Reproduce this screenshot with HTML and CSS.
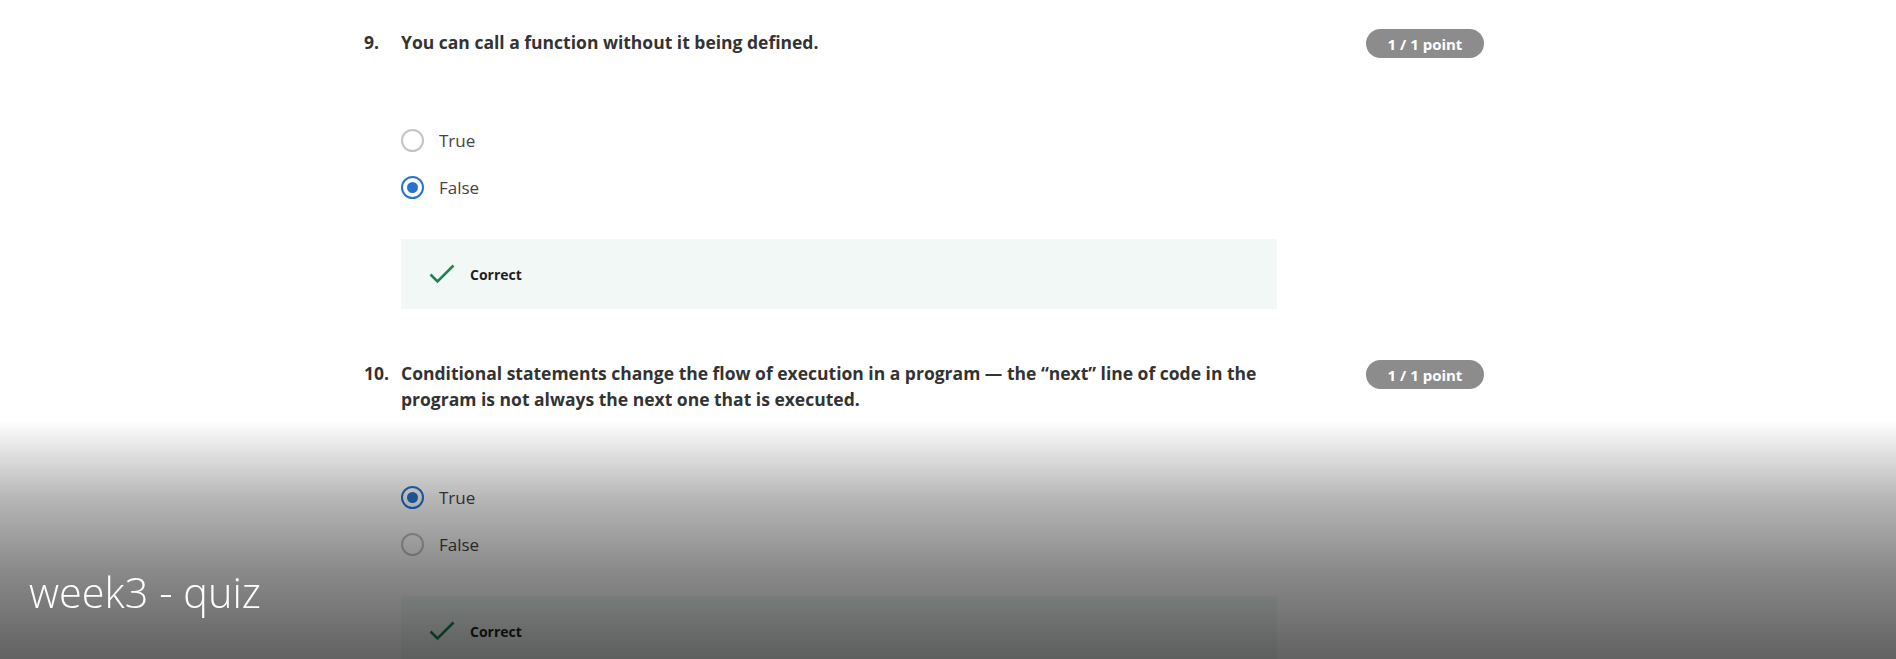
FILE: index.html
```html
<!DOCTYPE html>
<html lang="en">
<head>
<meta charset="utf-8">
<title>week3 - quiz</title>
<link rel="stylesheet" href="styles.css">
</head>
<body>
<main class="quiz">
  <section class="question">
    <div class="num">9.</div>
    <div class="body">
      <p class="prompt">You can call a function without it being defined.</p>
      <div class="options">
        <label class="option"><span class="radio"></span><span class="label">True</span></label>
        <label class="option"><span class="radio checked"></span><span class="label">False</span></label>
      </div>
      <div class="feedback">
        <svg class="check" width="26" height="20" viewBox="0 0 26 20"><path d="M1.5 10.5 L8.5 17.5 L24.5 1.5" fill="none" stroke="#1f8354" stroke-width="2.6"/></svg>
        <span>Correct</span>
      </div>
    </div>
    <div class="badge">1 / 1 point</div>
  </section>
  <section class="question">
    <div class="num">10.</div>
    <div class="body">
      <p class="prompt">Conditional statements change the flow of execution in a program — the “next” line of code in the program is not always the next one that is executed.</p>
      <div class="options">
        <label class="option"><span class="radio checked"></span><span class="label">True</span></label>
        <label class="option"><span class="radio"></span><span class="label">False</span></label>
      </div>
      <div class="feedback">
        <svg class="check" width="26" height="20" viewBox="0 0 26 20"><path d="M1.5 10.5 L8.5 17.5 L24.5 1.5" fill="none" stroke="#1f8354" stroke-width="2.6"/></svg>
        <span>Correct</span>
      </div>
    </div>
    <div class="badge">1 / 1 point</div>
  </section>
</main>
<div class="shade">
  <div class="title">week3 - quiz</div>
</div>
</body>
</html>
```
FILE: styles.css
```css
html, body {
  margin: 0;
  padding: 0;
  background: #ffffff;
  height: 100%;
  overflow: hidden;
}
body {
  font-family: "Open Sans", "Noto Sans", sans-serif;
  color: #1f1f1f;
}
.quiz {
  width: 1120px;
  margin-left: 364px;
  padding-top: 29px;
  display: flex;
  flex-direction: column;
  gap: 51px;
}
.question {
  display: flex;
  align-items: flex-start;
}
.num {
  width: 37px;
  flex: none;
  font-size: 17.5px;
  line-height: 26px;
  font-weight: 700;
  color: #333333;
}
.body {
  width: 876px;
  flex: none;
}
.prompt {
  margin: 0;
  font-size: 17.5px;
  line-height: 26px;
  font-weight: 700;
  color: #333333;
}
.options {
  margin-top: 62px;
  display: flex;
  flex-direction: column;
}
.option {
  height: 47px;
  display: flex;
  align-items: center;
  gap: 15px;
}
.radio {
  width: 23px;
  height: 23px;
  box-sizing: border-box;
  border: 2px solid #c4c4c4;
  border-radius: 50%;
  display: flex;
  align-items: center;
  justify-content: center;
  flex: none;
}
.radio.checked {
  border-color: #2a73cc;
}
.radio.checked::after {
  content: "";
  width: 11px;
  height: 11px;
  border-radius: 50%;
  background: #2a73cc;
}
.label {
  font-size: 17px;
  color: #444444;
}
.feedback {
  margin-top: 28px;
  height: 70px;
  background: #f1f8f5;
  display: flex;
  align-items: center;
  padding-left: 28px;
  gap: 15px;
  font-size: 14px;
  font-weight: 700;
  color: #1f1f1f;
}
.check {
  flex: none;
}
.badge {
  margin-left: auto;
  width: 118px;
  height: 29px;
  border-radius: 15px;
  background: #8c8c8c;
  color: #ffffff;
  font-size: 15px;
  font-weight: 700;
  display: flex;
  align-items: center;
  justify-content: center;
}
.shade {
  position: fixed;
  left: 0;
  right: 0;
  top: 420px;
  bottom: 0;
  background: linear-gradient(to bottom,
    rgba(0,0,0,0) 0%,
    rgba(0,0,0,0.29) 33.5%,
    rgba(0,0,0,0.46) 62.8%,
    rgba(0,0,0,0.6) 96%,
    rgba(0,0,0,0.61) 100%);
}
.title {
  position: absolute;
  left: 29px;
  top: 144px;
  font-family: "Open Sans", "Noto Sans", sans-serif;
  font-weight: 300;
  font-size: 41.5px;
  line-height: 56px;
  color: #ffffff;
}
```
